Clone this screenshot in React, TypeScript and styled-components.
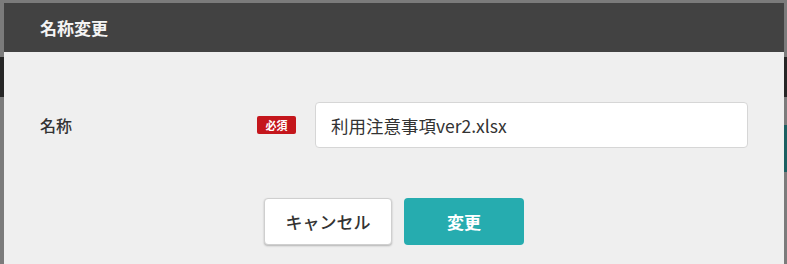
import React from "react";
import styled, { createGlobalStyle } from "styled-components";

const Global = createGlobalStyle`
  html, body { margin: 0; padding: 0; }
  body {
    width: 787px;
    height: 264px;
    overflow: hidden;
    background: #7a7a7a;
    font-family: "Noto Sans CJK JP", "Noto Sans", sans-serif;
  }
`;

const Page = styled.div`
  position: relative;
  width: 787px;
  height: 264px;
  overflow: hidden;
  display: flex;
  flex-direction: column;
  background: #7b7b7b;
`;

const Spacer = styled.div<{ $h: number }>`
  height: ${(p) => p.$h}px;
  flex: none;
`;

const DarkBand = styled.div`
  height: 40px;
  flex: none;
  background: #262626;
`;

const TealRow = styled.div`
  height: 47px;
  flex: none;
  display: flex;
  justify-content: flex-end;
`;

const TealBlock = styled.div`
  width: 40px;
  background: #1b5f61;
`;

const Overlay = styled.div`
  position: absolute;
  left: 4px;
  top: 3px;
  width: 780px;
  height: 280px;
  display: flex;
  flex-direction: column;
  background: #efefef;
`;

const Header = styled.div`
  height: 49px;
  flex: none;
  display: flex;
  align-items: center;
  padding: 0 36px;
  background: #424242;
  color: #f4f4f4;
  font-size: 17px;
  font-weight: 700;
  box-sizing: border-box;
`;

const Body = styled.div`
  display: flex;
  flex-direction: column;
  padding: 50px 36px 0;
  gap: 50px;
`;

const Row = styled.div`
  display: flex;
  align-items: center;
`;

const Label = styled.div`
  width: 217px;
  font-size: 16px;
  font-weight: 500;
  color: #333;
`;

const Badge = styled.span`
  width: 39px;
  height: 18px;
  margin-right: 19px;
  display: flex;
  align-items: center;
  justify-content: center;
  background: #c4161c;
  color: #fff;
  font-size: 11px;
  font-weight: 700;
  border-radius: 2px;
`;

const Input = styled.input`
  width: 433px;
  height: 46px;
  box-sizing: border-box;
  border: 1px solid #d6d6d6;
  border-radius: 4px;
  background: #fff;
  padding: 0 15px;
  font-family: "Noto Sans CJK JP", "Noto Sans", sans-serif;
  font-size: 17.5px;
  color: #333;
  outline: none;
`;

const Actions = styled.div`
  display: flex;
  justify-content: center;
  gap: 12px;
`;

const Button = styled.button<{ $primary?: boolean }>`
  height: 47px;
  width: ${(p) => (p.$primary ? 120 : 128)}px;
  box-sizing: border-box;
  border-radius: 4px;
  font-family: "Noto Sans CJK JP", "Noto Sans", sans-serif;
  font-size: 17px;
  font-weight: ${(p) => (p.$primary ? 700 : 500)};
  color: ${(p) => (p.$primary ? "#fff" : "#333")};
  background: ${(p) => (p.$primary ? "#26acaf" : "#fff")};
  border: ${(p) => (p.$primary ? "none" : "1px solid #cfcfcf")};
  box-shadow: ${(p) => (p.$primary ? "none" : "0 1px 2px rgba(0,0,0,0.25)")};
  cursor: pointer;
`;

export default function App() {
  return (
    <>
      <Global />
      <Page>
        <Spacer $h={57} />
        <DarkBand />
        <Spacer $h={28} />
        <TealRow>
          <TealBlock />
        </TealRow>
        <Overlay>
          <Header>名称変更</Header>
          <Body>
            <Row>
              <Label>名称</Label>
              <Badge>必須</Badge>
              <Input defaultValue="利用注意事項ver2.xlsx" />
            </Row>
            <Actions>
              <Button>キャンセル</Button>
              <Button $primary>変更</Button>
            </Actions>
          </Body>
        </Overlay>
      </Page>
    </>
  );
}
